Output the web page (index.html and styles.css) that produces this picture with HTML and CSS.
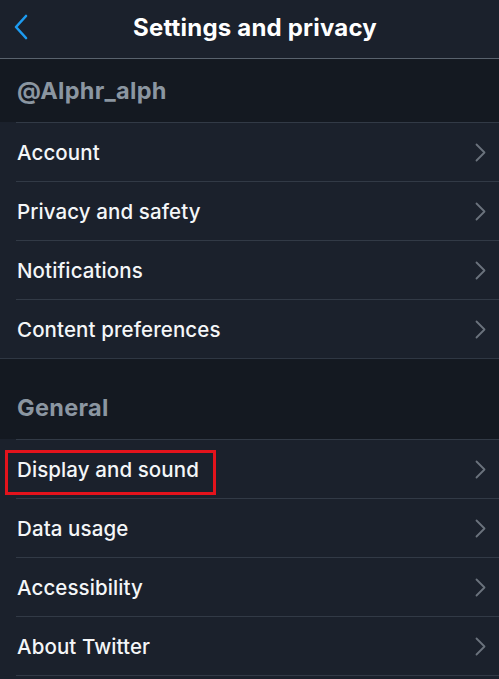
FILE: index.html
```html
<!DOCTYPE html>
<html>
<head>
<meta charset="utf-8">
<link rel="stylesheet" href="styles.css">
</head>
<body>
<div class="screen">
  <header class="topbar">
    <svg class="back" width="16" height="26" viewBox="0 0 16 26"><path d="M13 2 L3 13 L13 24" fill="none" stroke="#1d9bf0" stroke-width="2.6" stroke-linecap="round" stroke-linejoin="round"/></svg>
    <h1 class="title">Settings and privacy</h1>
  </header>
  <section class="group group-first">
    <div class="group-title">@Alphr_alph</div>
    <ul class="list">
      <li class="row"><span>Account</span><svg class="chev" width="11" height="19" viewBox="0 0 11 19"><path d="M1.5 1.5 L9.5 9.5 L1.5 17.5" fill="none" stroke="#6b737d" stroke-width="1.8" stroke-linecap="round" stroke-linejoin="round"/></svg></li>
      <li class="row"><span>Privacy and safety</span><svg class="chev" width="11" height="19" viewBox="0 0 11 19"><path d="M1.5 1.5 L9.5 9.5 L1.5 17.5" fill="none" stroke="#6b737d" stroke-width="1.8" stroke-linecap="round" stroke-linejoin="round"/></svg></li>
      <li class="row"><span>Notifications</span><svg class="chev" width="11" height="19" viewBox="0 0 11 19"><path d="M1.5 1.5 L9.5 9.5 L1.5 17.5" fill="none" stroke="#6b737d" stroke-width="1.8" stroke-linecap="round" stroke-linejoin="round"/></svg></li>
      <li class="row"><span>Content preferences</span><svg class="chev" width="11" height="19" viewBox="0 0 11 19"><path d="M1.5 1.5 L9.5 9.5 L1.5 17.5" fill="none" stroke="#6b737d" stroke-width="1.8" stroke-linecap="round" stroke-linejoin="round"/></svg></li>
    </ul>
  </section>
  <section class="group">
    <div class="group-title group-title-tall">General</div>
    <ul class="list list-last">
      <li class="row row-marked"><span>Display and sound</span><svg class="chev" width="11" height="19" viewBox="0 0 11 19"><path d="M1.5 1.5 L9.5 9.5 L1.5 17.5" fill="none" stroke="#6b737d" stroke-width="1.8" stroke-linecap="round" stroke-linejoin="round"/></svg></li>
      <li class="row"><span>Data usage</span><svg class="chev" width="11" height="19" viewBox="0 0 11 19"><path d="M1.5 1.5 L9.5 9.5 L1.5 17.5" fill="none" stroke="#6b737d" stroke-width="1.8" stroke-linecap="round" stroke-linejoin="round"/></svg></li>
      <li class="row"><span>Accessibility</span><svg class="chev" width="11" height="19" viewBox="0 0 11 19"><path d="M1.5 1.5 L9.5 9.5 L1.5 17.5" fill="none" stroke="#6b737d" stroke-width="1.8" stroke-linecap="round" stroke-linejoin="round"/></svg></li>
      <li class="row"><span>About Twitter</span><svg class="chev" width="11" height="19" viewBox="0 0 11 19"><path d="M1.5 1.5 L9.5 9.5 L1.5 17.5" fill="none" stroke="#6b737d" stroke-width="1.8" stroke-linecap="round" stroke-linejoin="round"/></svg></li>
    </ul>
  </section>
</div>
</body>
</html>
```
FILE: styles.css
```css
* { box-sizing: border-box; }
html, body {
  margin: 0;
  padding: 0;
  background: #1b212c;
}
body {
  font-family: Inter, "Noto Sans", Roboto, sans-serif;
  color: #ffffff;
  width: 499px;
  height: 679px;
  overflow: hidden;
}
.screen {
  display: flex;
  flex-direction: column;
}
.topbar {
  height: 59px;
  background: #1b212c;
  border-bottom: 1px solid #59626d;
  display: flex;
  align-items: center;
  justify-content: center;
  position: relative;
}
.back {
  position: absolute;
  left: 13px;
  top: 14px;
}
.title {
  margin: 0 0 4px 11px;
  font-size: 24px;
  font-weight: 700;
  letter-spacing: 0.2px;
}
.group-first {
  border-bottom: 1px solid #2f3743;
}
.group-title {
  height: 63px;
  background: #141921;
  color: #8b96a1;
  font-size: 23.5px;
  font-weight: 700;
  letter-spacing: 0.3px;
  padding: 0 0 0 17px;
  display: flex;
  align-items: center;
  padding-top: 0;
}
.group-title-tall {
  height: 80px;
  padding-top: 16px;
}
.list {
  list-style: none;
  margin: 0;
  padding: 0;
  background: #1b212c;
}
.row {
  position: relative;
  margin-left: 16px;
  height: 59px;
  border-top: 1px solid #323a46;
  display: flex;
  align-items: center;
  justify-content: space-between;
  padding: 0 13px 0 1px;
  font-size: 20.5px;
  font-weight: 500;
  letter-spacing: 0.1px;
  color: #f4f6f8;
}
.list-last .row:last-child {
  border-bottom: 1px solid #323a46;
  height: 60px;
}
.row-marked::before {
  content: "";
  position: absolute;
  left: -11px;
  top: 10px;
  width: 205px;
  height: 39px;
  border: 3px solid #e3131c;
}
.chev {
  display: block;
}
```
